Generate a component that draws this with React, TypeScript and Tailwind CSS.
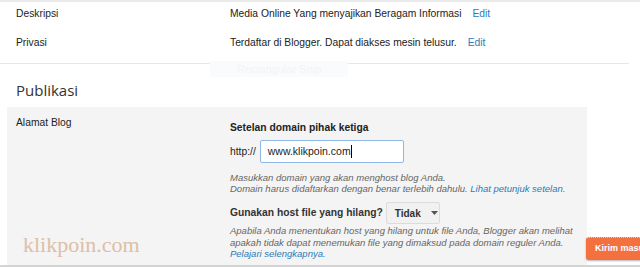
// App.tsx

import React from 'react';

export default function App() {
  return (
    <div className="relative w-[640px] h-[267px] overflow-hidden bg-white font-['Liberation_Sans',Arial,sans-serif] text-[10.3px] text-[#222]">
      <div className="h-[2px] bg-[#eaeaea]" />

      {/* basic settings */}
      <div className="pt-[5px] w-[629px] border-b border-[#e6e6e6] pb-[13px]">
        <div className="flex items-center h-[14px]">
          <div className="w-[230px] shrink-0 pl-4">Deskripsi</div>
          <div className="whitespace-nowrap">Media Online Yang menyajikan Beragam Informasi</div>
          <a className="ml-[11px] text-[#2b7bb9]">Edit</a>
        </div>
        <div className="flex items-center h-[14px] mt-[15px]">
          <div className="w-[230px] shrink-0 pl-4">Privasi</div>
          <div className="whitespace-nowrap">Terdaftar di Blogger. Dapat diakses mesin telusur.</div>
          <a className="ml-[11px] text-[#2b7bb9]">Edit</a>
        </div>
      </div>

      <h2 className="pl-4 pt-[16px] h-[43px] text-[15px] leading-[20px] text-[#333] font-['Open_Sans',sans-serif]">
        Publikasi
      </h2>

      {/* publishing panel */}
      <div className="ml-[7px] w-[580px] h-[158px] bg-[#f4f4f4] flex pt-[9px]">
        <div className="w-[223px] shrink-0 pl-[9px] leading-[13px]">Alamat Blog</div>
        <div className="flex flex-col whitespace-nowrap">
          <div className="mt-[5px] font-bold leading-[13px]">Setelan domain pihak ketiga</div>
          <div className="flex items-center mt-[6px]">
            <span className="mr-[4px]">http://</span>
            <div className="w-[144px] h-[23px] bg-white border border-[#8fb8e6] rounded-[2px] flex items-center pl-[7px] text-[10.5px]">
              www.klikpoin.com<span className="w-px h-[13px] bg-black" />
            </div>
          </div>
          <div className="mt-[9px] italic text-[#666] leading-[11px] text-[9.5px]">
            <div>Masukkan domain yang akan menghost blog Anda.</div>
            <div>
              Domain harus didaftarkan dengan benar terlebih dahulu.{' '}
              <span className="text-[#2b7bb9]">Lihat petunjuk setelan.</span>
            </div>
          </div>
          <div className="flex items-center mt-[8px]">
            <span className="font-bold text-[10.3px] text-[#333]">Gunakan host file yang hilang?</span>
            <div className="ml-[3px] w-[54px] h-[22px] bg-[#f1f1f1] border border-[#dcdcdc] rounded-[2px] flex items-center pl-[8px] font-bold text-[10px] text-[#333]">
              Tidak
              <svg width="7" height="4" viewBox="0 0 7 4" className="ml-[10px]">
                <path d="M0 0h7L3.5 4z" fill="#555" />
              </svg>
            </div>
          </div>
          <div className="mt-[1px] italic text-[#666] leading-[11.5px] text-[9.5px]">
            <div>Apabila Anda menentukan host yang hilang untuk file Anda, Blogger akan melihat</div>
            <div>apakah tidak dapat menemukan file yang dimaksud pada domain reguler Anda.</div>
            <div className="text-[#2b7bb9]">Pelajari selengkapnya.</div>
          </div>
        </div>
      </div>
      <div className="h-[2px] bg-[#d4d4d4]" />

      {/* screenshot artifacts */}
      <div className="absolute left-[210px] top-[61px] w-[138px] h-[16px] bg-[#fafbfd] text-[#f2f4f7] text-[11px] pl-[27px] leading-[16px]">
        Rectangular Snip
      </div>
      <div className="absolute left-[23px] top-[232px] font-['Liberation_Serif',serif] text-[22px] leading-[26px] text-[#dcc0a6]">
        klikpoin.com
      </div>
      <div className="absolute left-[586px] top-[237px] w-[70px] h-[23px] rounded-[3px] bg-[#f4713f] shadow-[0_1px_2px_rgba(0,0,0,0.3)] text-white font-bold text-[9px] pl-[9px] flex items-center border-t border-dotted border-[#ffc2a8] whitespace-nowrap">
        Kirim masukan
      </div>
    </div>
  );
}
